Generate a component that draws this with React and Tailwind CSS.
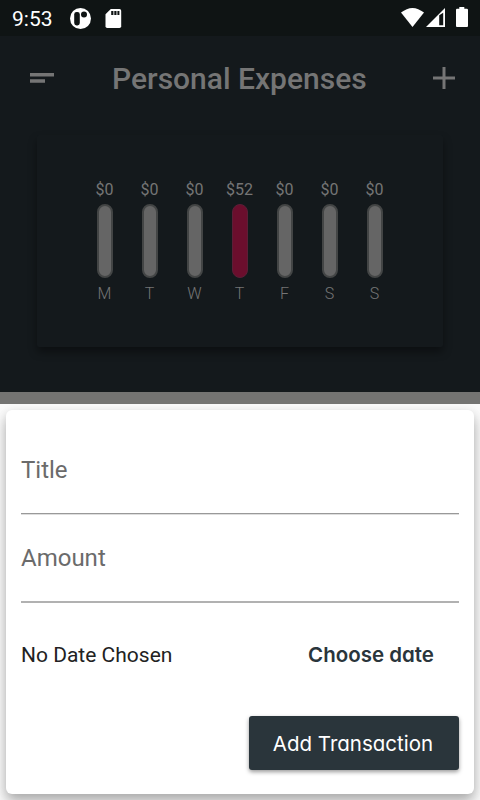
const days = [
  { day: 'M', amount: '$0', spent: false },
  { day: 'T', amount: '$0', spent: false },
  { day: 'W', amount: '$0', spent: false },
  { day: 'T', amount: '$52', spent: true },
  { day: 'F', amount: '$0', spent: false },
  { day: 'S', amount: '$0', spent: false },
  { day: 'S', amount: '$0', spent: false },
];

function StatusBar() {
  return (
    <div className="flex h-9 items-center bg-[#0f1414] pl-3 text-white">
      <span className="w-[58px] pt-px text-[21px] leading-9 whitespace-nowrap">9:53</span>
      <svg className="h-9 w-[22px]" viewBox="0 0 22 36">
        <circle cx="10.5" cy="18.5" r="10.5" fill="#fff" />
        <rect x="4.2" y="12" width="5.6" height="13.5" rx="2.4" fill="#0f1414" />
        <circle cx="14" cy="14.6" r="3" fill="#0f1414" />
      </svg>
      <svg className="ml-[13px] h-9 w-[17px]" viewBox="0 0 17 36">
        <path d="M5.8 9H14.5Q16.2 9 16.2 10.7V26.2Q16.2 28 14.5 28H2.2Q.5 28 .5 26.2V14.2Z" fill="#fff" />
        <path d="M6.2 11h2.200v4H6.200zM9.300 11h2.200v4H9.300zM12.400 11h2v4h-2z" fill="#0f1414" />
      </svg>
      <svg className="ml-auto h-9 w-[80px]" viewBox="400 0 80 36">
        <path d="M401 12.6Q412.5 3.2 424 12.6L412.5 27Z" fill="#fff" />
        <path d="M445 8V27H426Z" fill="#fff" />
        <path d="M439.2 15.2 443.2 12.8V25.2H439.2Z" fill="#0f1414" />
        <path d="M459.3 7h5v1.8h2.6Q468 8.800 468 10V26Q468 27 467 27H457Q456 27 456 26V10Q456 8.800 457 8.800H459.300Z" fill="#fff" />
      </svg>
    </div>
  );
}

function Header() {
  return (
    <header className="flex h-[84px] items-center pl-[30px] pr-[25px]">
      <svg className="h-[10px] w-6" viewBox="0 0 24 10" fill="#757575">
        <path d="M0 0h24v3.500H0zM0 6.300h15v3.500H0z" />
      </svg>
      <h1 className="mt-0.5 ml-[58px] text-[30px] leading-9 font-medium whitespace-nowrap text-[#757575]">Personal Expenses</h1>
      <svg className="ml-auto h-[22px] w-[22px]" viewBox="0 0 22 22" fill="#757575">
        <path d="M9.500 0h3v9.500H22v3h-9.500V22h-3v-9.500H0v-3h9.500z" />
      </svg>
    </header>
  );
}

function Chart() {
  return (
    <section className="mx-[37px] mt-[15px] flex h-[212px] justify-center rounded-[2px] bg-[#14191c] pt-[45px] shadow-[0_5px_9px_rgba(0,0,0,0.4)]">
      {days.map((d, i) => (
        <div key={i} className="flex w-[45px] flex-col items-center text-[#757575]">
          <span className="h-6 pr-px text-base leading-[19px]">{d.amount}</span>
          {d.spent ? (
            <div className="h-[74px] w-4 rounded-full border border-[#5b1f37] bg-[#6b0e2d]" />
          ) : (
            <div className="h-[74px] w-4 rounded-full border-2 border-[#434545] bg-[#656565]" />
          )}
          <span className="mt-1.5 pr-px text-base leading-[19px] font-light">{d.day}</span>
        </div>
      ))}
    </section>
  );
}

function TransactionSheet() {
  return (
    <div className="h-[396px] overflow-hidden bg-[#fafafa] p-1.5">
      <form className="flex h-96 flex-col rounded-md bg-white px-[15px] shadow-[0_8px_14px_rgba(0,0,0,0.28),0_2px_10px_rgba(0,0,0,0.08)]">
        <label className="mt-[15px] h-[89px] border-b border-[#999] pt-[30px] text-2xl leading-[30px] text-[#6b6b6b] shadow-[0_1px_0_#dedede]">Title</label>
        <label className="h-[89px] border-b-2 border-[#b1b1b1] pt-[29px] text-2xl leading-[30px] text-[#6b6b6b]">Amount</label>
        <div className="mt-[36px] flex h-8 items-center justify-between">
          <span className="text-[21px] leading-8 text-[#222]">No Date Chosen</span>
          <button type="button" className="mr-[25px] w-[126px] font-['Inter',sans-serif] text-[20.5px] leading-8 font-[560] whitespace-nowrap text-[#2a353b] [font-feature-settings:'cv11']">Choose date</button>
        </div>
        <button type="button" className="mt-[45px] h-[54px] w-[210px] self-end rounded-[3px] bg-[#2a353b] pt-0.5 pr-[2px] font-['Inter',sans-serif] text-[20.5px] whitespace-nowrap text-white shadow-[0_2px_4px_rgba(0,0,0,0.4)] [font-feature-settings:'cv11']">Add Transaction</button>
      </form>
    </div>
  );
}

export default function App() {
  return (
    <main className="h-[800px] w-[480px] overflow-hidden bg-[#757575] font-['Roboto',sans-serif] antialiased">
      <div className="h-[392px] bg-[#14191c]">
        <StatusBar />
        <Header />
        <Chart />
      </div>
      <div className="h-3 bg-[#747472]" />
      <TransactionSheet />
    </main>
  );
}
